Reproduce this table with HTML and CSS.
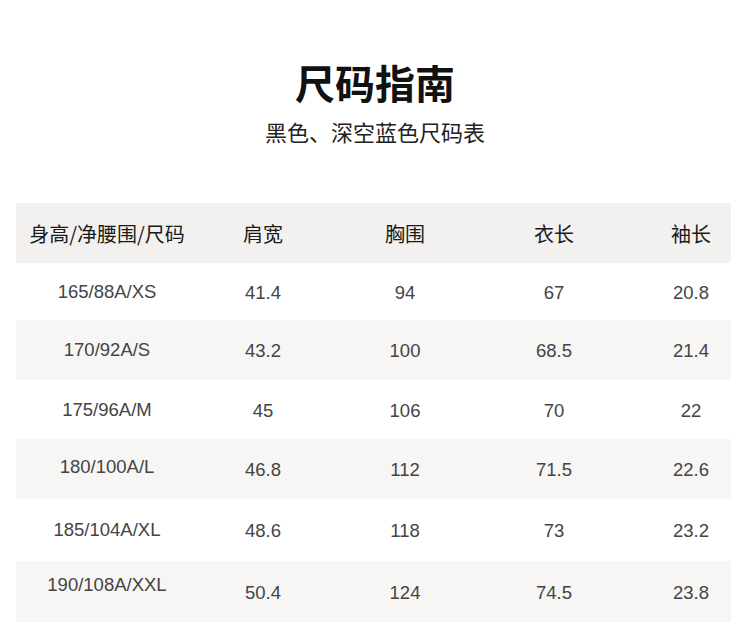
FILE: index.html
```html
<!DOCTYPE html>
<html lang="zh-CN">
<head>
<meta charset="utf-8">
<title>尺码指南</title>
<link rel="stylesheet" href="styles.css">
</head>
<body>
<header class="intro">
  <h1 class="title">尺码指南</h1>
  <p class="subtitle">黑色、深空蓝色尺码表</p>
</header>
<section class="table">
  <div class="row head">
    <div class="cell">身高/净腰围/尺码</div>
    <div class="cell">肩宽</div>
    <div class="cell">胸围</div>
    <div class="cell">衣长</div>
    <div class="cell last">袖长</div>
  </div>
  <div class="row r1">
    <div class="cell">165/88A/XS</div>
    <div class="cell">41.4</div>
    <div class="cell">94</div>
    <div class="cell">67</div>
    <div class="cell last">20.8</div>
  </div>
  <div class="row r2 alt">
    <div class="cell">170/92A/S</div>
    <div class="cell">43.2</div>
    <div class="cell">100</div>
    <div class="cell">68.5</div>
    <div class="cell last">21.4</div>
  </div>
  <div class="row r3">
    <div class="cell">175/96A/M</div>
    <div class="cell">45</div>
    <div class="cell">106</div>
    <div class="cell">70</div>
    <div class="cell last">22</div>
  </div>
  <div class="row r4 alt">
    <div class="cell up">180/100A/L</div>
    <div class="cell">46.8</div>
    <div class="cell">112</div>
    <div class="cell">71.5</div>
    <div class="cell last">22.6</div>
  </div>
  <div class="row r5">
    <div class="cell">185/104A/XL</div>
    <div class="cell">48.6</div>
    <div class="cell">118</div>
    <div class="cell">73</div>
    <div class="cell last">23.2</div>
  </div>
  <div class="row r6 alt">
    <div class="cell upmore">190/108A/XXL</div>
    <div class="cell">50.4</div>
    <div class="cell">124</div>
    <div class="cell">74.5</div>
    <div class="cell last">23.8</div>
  </div>
</section>
</body>
</html>
```

FILE: styles.css
```css
html, body {
  margin: 0;
  padding: 0;
  background: #ffffff;
}

body {
  font-family: "Noto Sans CJK SC", "Noto Sans", sans-serif;
  color: #1c1c1c;
  width: 750px;
}

.intro {
  padding-top: 62px;
  text-align: center;
}

.title {
  margin: 0;
  font-size: 40px;
  line-height: 40px;
  font-weight: 700;
  color: #111111;
}

.subtitle {
  margin: 16px 0 0;
  font-size: 22px;
  line-height: 26px;
  color: #222222;
}

.table {
  margin: 59px 16px 0;
  width: 715px;
}

.row {
  display: grid;
  grid-template-columns: 182px 130px 154px 144px 105px;
  align-items: center;
  text-align: center;
  font-family: "Liberation Sans", "Noto Sans CJK SC", sans-serif;
  font-size: 18.5px;
  color: #444444;
}

.row.head {
  height: 60px;
  background: #f2f1ef;
  font-family: "Noto Sans CJK SC", sans-serif;
  font-size: 20px;
  color: #1a1a1a;
}

.row.alt {
  background: #f7f6f4;
}

.r1 { height: 57px; }
.r2 { height: 60px; }
.r3 { height: 59px; }
.r4 { height: 60px; }
.r5 { height: 62px; }
.r6 { height: 61px; }

.cell.last {
  padding-left: 25px;
}

.cell.up {
  padding-bottom: 4px;
}

.cell.upmore {
  padding-bottom: 14px;
}

.row .cell:not(:first-child) {
  padding-top: 2px;
}

.row.head .cell {
  padding-top: 0;
}
```
